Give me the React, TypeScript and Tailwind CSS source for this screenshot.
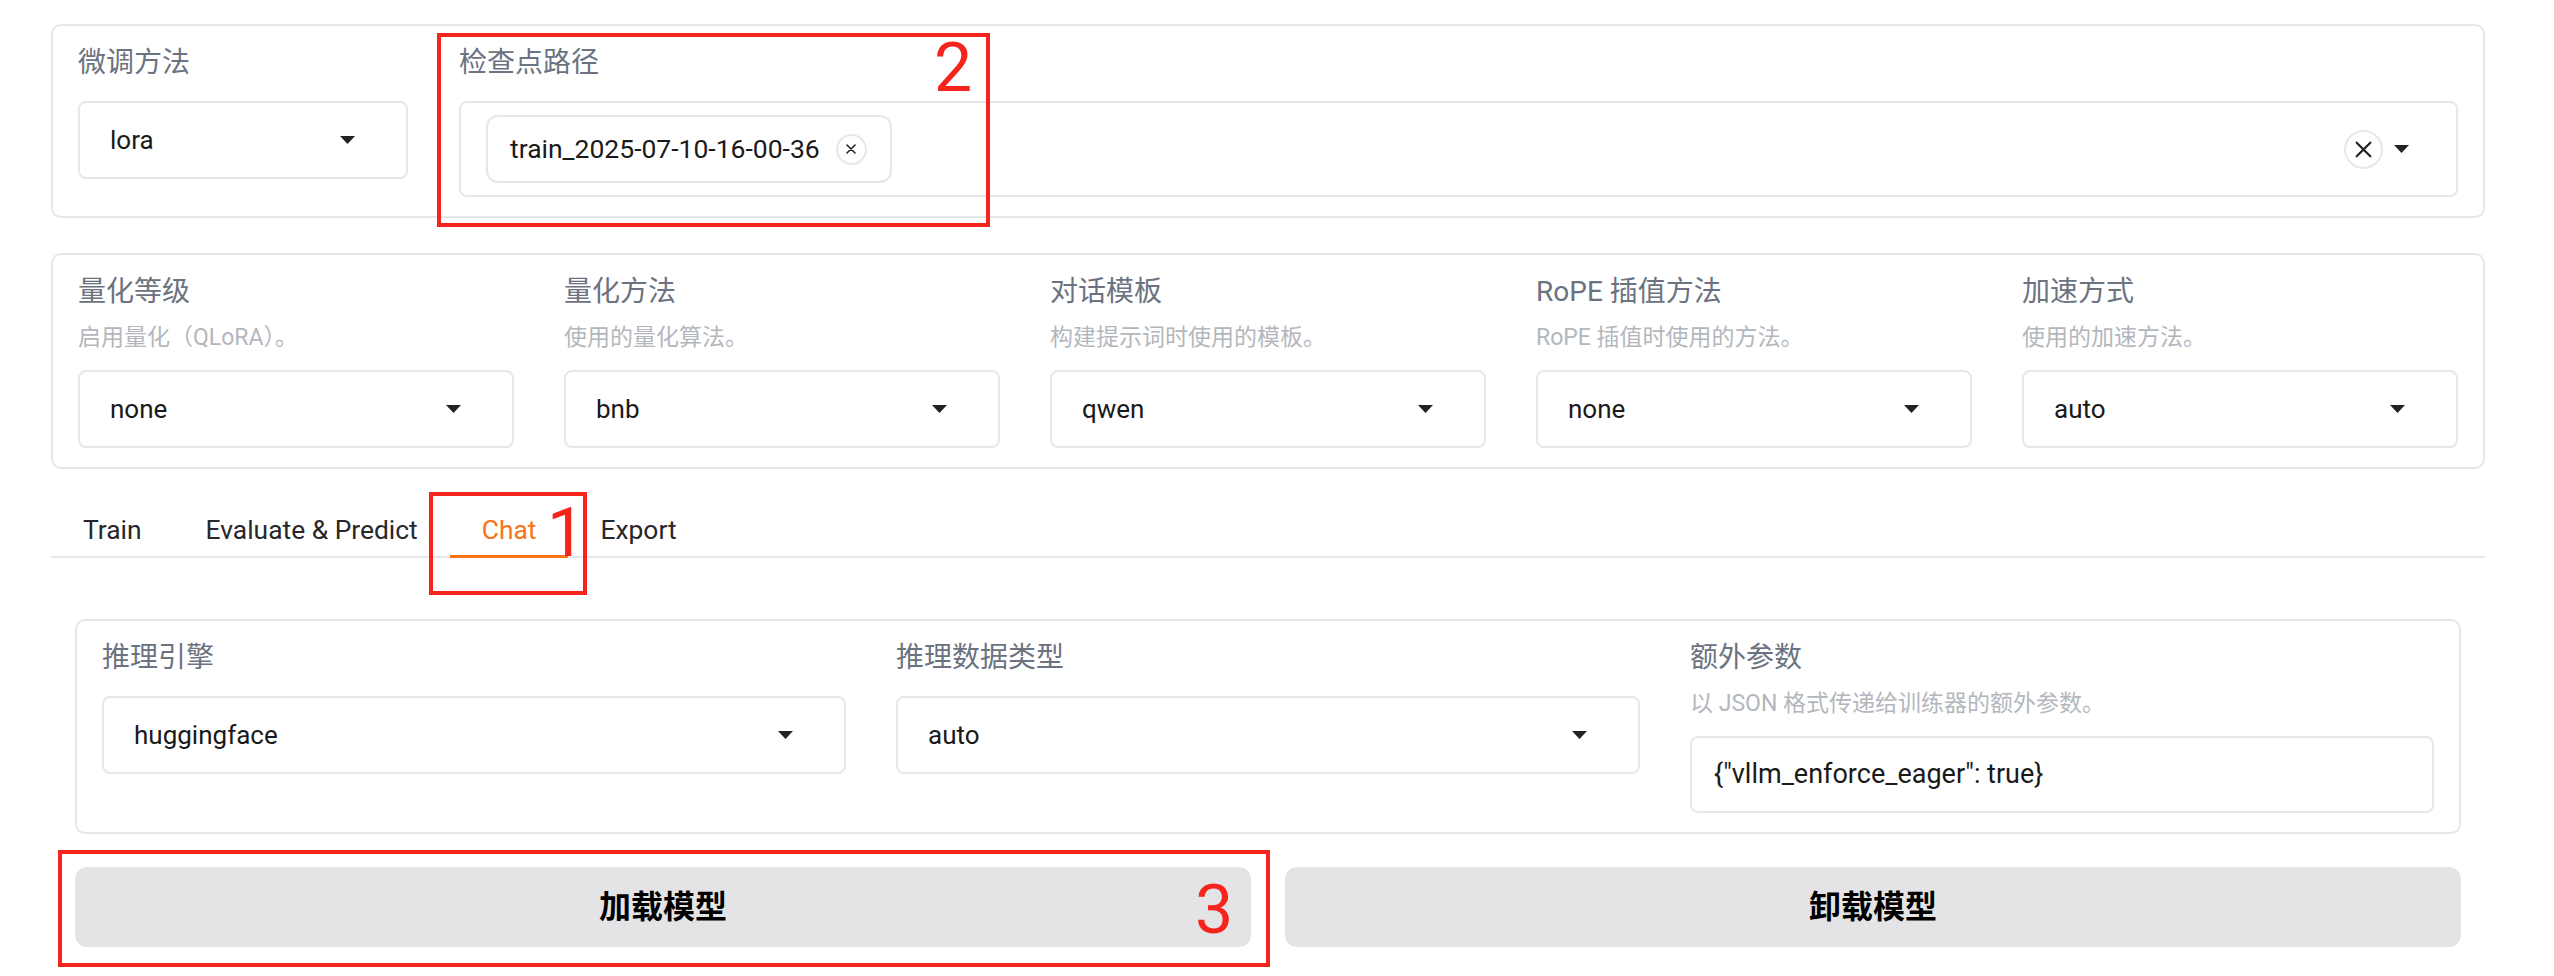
const Arrow = () => (
  <svg width="15" height="8" viewBox="0 0 15 8" className="shrink-0">
    <path d="M0 0h15L7.5 8z" fill="#222" />
  </svg>
);

const Cross = ({ size, stroke }: { size: number; stroke: number }) => (
  <svg width={size} height={size} viewBox="0 0 10 10">
    <path d="M1 1L9 9M9 1L1 9" stroke="#222" strokeWidth={stroke} strokeLinecap="round" fill="none" />
  </svg>
);

const Label = ({ children }: { children: React.ReactNode }) => (
  <div className="h-[36px] leading-[36px] text-[28px] text-[#6b7280] whitespace-nowrap">{children}</div>
);

const Info = ({ children }: { children: React.ReactNode }) => (
  <div className="mt-[12px] mb-[16px] h-[32px] leading-[32px] text-[23px] text-[#b3b7bd] whitespace-nowrap">{children}</div>
);

const Dropdown = ({ value }: { value: string }) => (
  <div className="h-[78px] border-2 border-[#e5e7eb] rounded-[8px] bg-white flex items-center justify-between pl-[30px] pr-[51px]">
    <span className="text-[26px] text-[#1a1a1a]">{value}</span>
    <Arrow />
  </div>
);

const quant = [
  { label: "量化等级", info: "启用量化（QLoRA）。", value: "none" },
  { label: "量化方法", info: "使用的量化算法。", value: "bnb" },
  { label: "对话模板", info: "构建提示词时使用的模板。", value: "qwen" },
  { label: "RoPE 插值方法", info: "RoPE 插值时使用的方法。", value: "none" },
  { label: "加速方式", info: "使用的加速方法。", value: "auto" },
];

const tabs = ["Train", "Evaluate & Predict", "Chat", "Export"];

const Mark = ({ n }: { n: string }) => (
  <span className="absolute text-[68px] leading-none text-[#f5241c]">{n}</span>
);

export default function App() {
  return (
    <div className="relative w-[2554px] h-[976px] bg-white overflow-hidden font-['Roboto','Noto_Sans_CJK_SC',sans-serif]">
      <div className="ml-[51px] w-[2434px] pt-[24px]">
        {/* model / checkpoint */}
        <div className="border-2 border-[#e5e7eb] rounded-[10px] px-[25px] py-[19px] flex gap-[51px]">
          <div className="w-[330px] shrink-0">
            <Label>微调方法</Label>
            <div className="mt-[20px]">
              <Dropdown value="lora" />
            </div>
          </div>
          <div className="flex-1">
            <Label>检查点路径</Label>
            <div className="mt-[20px] h-[96px] border-2 border-[#e5e7eb] rounded-[8px] flex items-center pl-[25px] pr-[47px]">
              <div className="h-[68px] border-2 border-[#e5e7eb] rounded-[12px] flex items-center pl-[22px] pr-[23px] gap-[16px]">
                <span className="text-[26.5px] text-[#1a1a1a]">train_2025-07-10-16-00-36</span>
                <span className="w-[31px] h-[31px] rounded-full border-2 border-[#e5e7eb] flex items-center justify-center">
                  <Cross size={10} stroke={1.6} />
                </span>
              </div>
              <div className="flex-1" />
              <span className="w-[39px] h-[39px] rounded-full border-2 border-[#e5e7eb] flex items-center justify-center">
                <Cross size={17} stroke={1.3} />
              </span>
              <span className="ml-[11px]">
                <Arrow />
              </span>
            </div>
          </div>
        </div>

        {/* quantization etc */}
        <div className="mt-[35px] border-2 border-[#e5e7eb] rounded-[10px] px-[25px] py-[19px] grid grid-cols-5 gap-x-[50px]">
          {quant.map((q) => (
            <div key={q.label}>
              <Label>{q.label}</Label>
              <Info>{q.info}</Info>
              <Dropdown value={q.value} />
            </div>
          ))}
        </div>

        {/* tabs */}
        <div className="mt-[36px] flex border-b-2 border-[#e5e7eb]">
          {tabs.map((t) => (
            <div
              key={t}
              className={
                "relative h-[51px] px-[32px] flex items-center text-[26.4px] whitespace-nowrap " +
                (t === "Chat" ? "text-[#f97316]" : "text-[#27272a]")
              }
            >
              {t}
              {t === "Chat" && <span className="absolute left-0 right-0 bottom-[-2px] h-[3px] bg-[#f97316]" />}
            </div>
          ))}
        </div>

        {/* chat panel */}
        <div className="px-[24px]">
          <div className="mt-[61px] border-2 border-[#e5e7eb] rounded-[10px] px-[25px] py-[19px] grid grid-cols-3 gap-x-[50px]">
            <div>
              <Label>推理引擎</Label>
              <div className="mt-[20px]">
                <Dropdown value="huggingface" />
              </div>
            </div>
            <div>
              <Label>推理数据类型</Label>
              <div className="mt-[20px]">
                <Dropdown value="auto" />
              </div>
            </div>
            <div>
              <Label>额外参数</Label>
              <Info>以 JSON 格式传递给训练器的额外参数。</Info>
              <div className="h-[77px] border-2 border-[#e5e7eb] rounded-[8px] flex items-center px-[22px] text-[27px] text-[#1a1a1a]">
                {'{"vllm_enforce_eager": true}'}
              </div>
            </div>
          </div>

          <div className="mt-[33px] grid grid-cols-2 gap-[34px]">
            <button className="h-[80px] rounded-[12px] bg-[#e4e4e7] text-[32px] font-bold text-black">加载模型</button>
            <button className="h-[80px] rounded-[12px] bg-[#e4e4e7] text-[32px] font-bold text-black">卸载模型</button>
          </div>
        </div>
      </div>

      {/* annotations */}
      <div className="absolute left-[437px] top-[33px] w-[553px] h-[194px] border-[4px] border-[#f5241c]" />
      <div className="absolute left-[934px] top-[34px]"><Mark n="2" /></div>
      <div className="absolute left-[429px] top-[492px] w-[158px] h-[103px] border-[4px] border-[#f5241c]" />
      <div className="absolute left-[547px] top-[499px]"><Mark n="1" /></div>
      <div className="absolute left-[58px] top-[850px] w-[1212px] h-[117px] border-[4px] border-[#f5241c]" />
      <div className="absolute left-[1195px] top-[876px]"><Mark n="3" /></div>
    </div>
  );
}
